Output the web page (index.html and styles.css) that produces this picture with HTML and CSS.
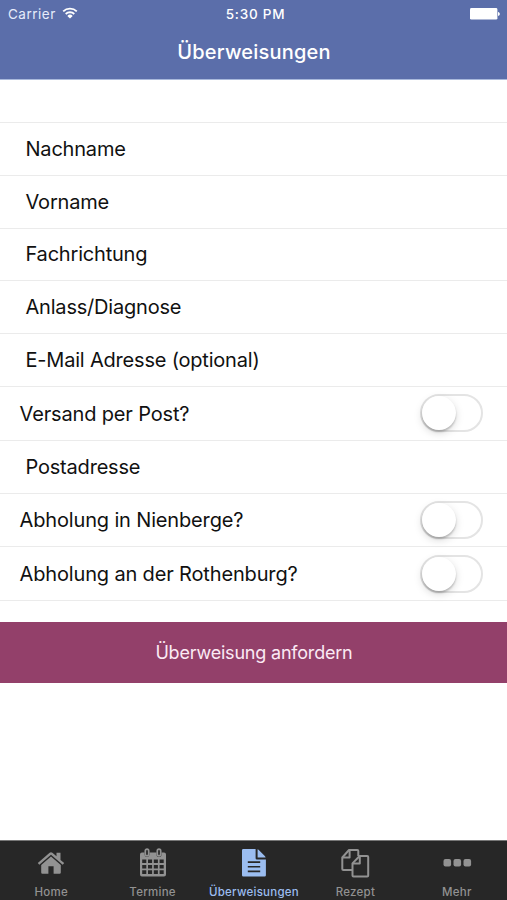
FILE: index.html
```html
<!DOCTYPE html>
<html lang="de">

<head>
  <meta charset="UTF-8">
  <meta name="viewport" content="width=device-width, initial-scale=1.0">
  <title>Überweisungen</title>
  <link rel="stylesheet" href="styles.css">
</head>

<body>
  <div class="app">
    <header class="header">
      <div class="status">
        <div class="status__carrier">
          <span>Carrier</span>
          <svg class="wifi" viewBox="0 0 16 12" width="16" height="12">
            <path d="M1.2 4.4a9.8 9.8 0 0 1 13.6 0M3.7 7a6.2 6.2 0 0 1 8.6 0" fill="none" stroke="#fff" stroke-width="1.8" />
            <path d="M8 11.6L5.3 8.9a3.9 3.9 0 0 1 5.4 0z" fill="#fff" />
          </svg>
        </div>
        <span class="status__time">5:30 PM</span>
        <div class="status__battery">
          <svg viewBox="0 0 30 12" width="30" height="12">
            <rect x="0" y="0" width="27.4" height="11.6" rx="1.4" fill="#fff" />
            <path d="M28 4c2.4.4 2.4 3.4 0 3.8z" fill="#fff" />
          </svg>
        </div>
      </div>
      <h1 class="title">Überweisungen</h1>
    </header>

    <main class="content">
      <form class="form">
        <div class="row"><span class="label">Nachname</span></div>
        <div class="row"><span class="label">Vorname</span></div>
        <div class="row"><span class="label">Fachrichtung</span></div>
        <div class="row"><span class="label">Anlass/Diagnose</span></div>
        <div class="row"><span class="label">E-Mail Adresse (optional)</span></div>
        <div class="row row--switch"><span class="label">Versand per Post?</span><span class="switch"></span></div>
        <div class="row"><span class="label">Postadresse</span></div>
        <div class="row row--switch"><span class="label">Abholung in Nienberge?</span><span class="switch"></span></div>
        <div class="row row--switch"><span class="label">Abholung an der Rothenburg?</span><span class="switch"></span></div>
        <button type="button" class="btn">Überweisung anfordern</button>
      </form>
    </main>

    <nav class="tabs">
      <a class="tab">
        <svg viewBox="0 0 30 30" width="30" height="30">
          <path d="M1.8 15.1L13.6 4.7q1.4-1.1 2.8 0l4.1 3.6V4.7h4v7.2l3.7 3.2-1.5 1.7L15 6.8 3.3 16.8z" fill="currentColor" />
          <path d="M15 8.6l9.8 8.3v7.6q0 1.2-1.2 1.2h-6v-7.4h-5.2v7.4h-6q-1.2 0-1.2-1.2v-7.6z" fill="currentColor" />
        </svg>
        <span>Home</span>
      </a>
      <a class="tab">
        <svg viewBox="0 0 30 30" width="30" height="30">
          <path fill-rule="evenodd" d="M4 4.4h22q2 0 2 2v20q0 2-2 2H4q-2 0-2-2v-20q0-2 2-2zM4.2 11.5v3.6h4.1v-3.6zm5.8 0v3.6h4.1v-3.6zm5.8 0v3.6h4.1v-3.6zm5.8 0v3.6h4.1v-3.6zM4.2 16.9v3.6h4.1v-3.6zm5.8 0v3.6h4.1v-3.6zm5.8 0v3.6h4.1v-3.6zm5.8 0v3.6h4.1v-3.6zM4.2 22.3v3.6h4.1v-3.6zm5.8 0v3.6h4.1v-3.6zm5.8 0v3.6h4.1v-3.6zm5.8 0v3.6h4.1v-3.6z" fill="currentColor" />
          <path d="M6.5 4v2.5a2.5 2.5 0 0 0 5 0V4zM18.5 4v2.5a2.5 2.5 0 0 0 5 0V4z" fill="#272727" />
          <rect x="7.3" y="1.2" width="3.4" height="6.6" rx="1.7" fill="#272727" stroke="currentColor" stroke-width="1.7" />
          <rect x="19.3" y="1.2" width="3.4" height="6.6" rx="1.7" fill="#272727" stroke="currentColor" stroke-width="1.7" />
        </svg>
        <span>Termine</span>
      </a>
      <a class="tab tab--active">
        <svg viewBox="0 0 30 30" width="30" height="30">
          <path fill-rule="evenodd" d="M4.3 1h12.3v9.2q0 1.3 1.3 1.3h9v15.7q0 1.3-1.3 1.3H4.3Q3 28.5 3 27.2V2.3Q3 1 4.3 1zM8.8 13.3v1.7h12.4v-1.7zm0 4.6v1.7h12.4v-1.7zm0 4.6v1.7h12.4v-1.7z" fill="currentColor" />
          <path d="M18.6 1.2q.6.2 1.2.8l6 6q.6.6.8 1.4h-8z" fill="currentColor" />
        </svg>
        <span>Überweisungen</span>
      </a>
      <a class="tab">
        <svg viewBox="0 0 30 30" width="30" height="30" fill="none" stroke="currentColor" stroke-width="2" stroke-linejoin="round">
          <path d="M12.4 22H3.3q-1 0-1-1V9.5L9 2h8.3q1 0 1 1v5" />
          <path d="M9.6 2.2v7.3H2.6" />
          <path d="M19.6 8h7.6q1 0 1 1v18.5q0 1-1 1H13.5q-1 0-1-1V15.4z" />
          <path d="M19.8 8.2v7.3h-7" />
        </svg>
        <span>Rezept</span>
      </a>
      <a class="tab">
        <svg viewBox="0 0 30 30" width="30" height="30" fill="currentColor">
          <rect x="1.5" y="10.9" width="7.6" height="7.6" rx="2" />
          <rect x="11.5" y="10.9" width="7.6" height="7.6" rx="2" />
          <rect x="21.5" y="10.9" width="7.6" height="7.6" rx="2" />
        </svg>
        <span>Mehr</span>
      </a>
    </nav>
  </div>
</body>

</html>
```

FILE: styles.css
```css
* {
  box-sizing: border-box;
}

body {
  margin: 0;
  background: #fff;
  font-family: Inter, "Liberation Sans", sans-serif;
  color: #111;
}

.app {
  display: flex;
  flex-direction: column;
  height: 100vh;
  overflow: hidden;
}

.header {
  height: 80px;
  background: #5b6eaa;
  border-bottom: 1px solid #a9b9dc;
  color: #fff;
}

.status {
  display: grid;
  grid-template-columns: 1fr auto 1fr;
  align-items: center;
  height: 27px;
  padding: 0 7px 0 8px;
  font-size: 13.5px;
}

.status__carrier {
  display: flex;
  align-items: center;
  gap: 6px;
  color: #e6ecfb;
  letter-spacing: 0.5px;
}

.wifi {
  margin-top: -1px;
}

.status__time {
  padding-left: 3px;
  font-weight: 500;
  letter-spacing: 0.75px;
}

.status__battery {
  display: flex;
  justify-content: flex-end;
}

.title {
  margin: 0;
  padding-left: 1px;
  font-size: 20px;
  font-weight: 500;
  line-height: 51px;
  letter-spacing: 0.2px;
  text-align: center;
}

.content {
  flex: 1;
  padding-top: 42px;
}

.row {
  display: flex;
  align-items: center;
  height: 52.8px;
  padding-left: 25.5px;
  border-top: 1px solid #ebebeb;
  font-size: 20px;
  letter-spacing: -0.2px;
}

.row--switch {
  justify-content: space-between;
  height: 53.8px;
  padding: 0 24px 0 19.5px;
  letter-spacing: -0.15px;
}

.row--switch .label {
  padding-top: 1px;
}

.row--switch:nth-last-child(2) {
  height: 54.4px;
  border-bottom: 1px solid #ebebeb;
}

.switch {
  width: 63px;
  height: 38px;
  border: 2px solid #e4e4e4;
  border-radius: 19px;
}

.switch::before {
  content: "";
  display: block;
  width: 34px;
  height: 34px;
  border-radius: 50%;
  background: #fff;
  box-shadow: 0 2px 2px rgba(0, 0, 0, 0.2), 0 3px 8px rgba(0, 0, 0, 0.15);
}

.btn {
  display: block;
  width: 100%;
  height: 61px;
  margin-top: 21px;
  padding: 0 0 0 1px;
  border: none;
  background: #93406a;
  color: #fbeaf4;
  font-family: inherit;
  font-size: 18px;
  letter-spacing: -0.2px;
}

.tabs {
  display: grid;
  grid-template-columns: repeat(5, 1fr);
  height: 60px;
  background: #272727;
  border-top: 1px solid #777;
}

.tab {
  display: flex;
  flex-direction: column;
  align-items: center;
  padding: 7px 0 0 1px;
  color: #929292;
  font-size: 11.5px;
  font-weight: 500;
  line-height: 15px;
  letter-spacing: 0.25px;
}

.tab span {
  margin-top: 7px;
}

.tab--active {
  color: #9bbdf0;
}
```
